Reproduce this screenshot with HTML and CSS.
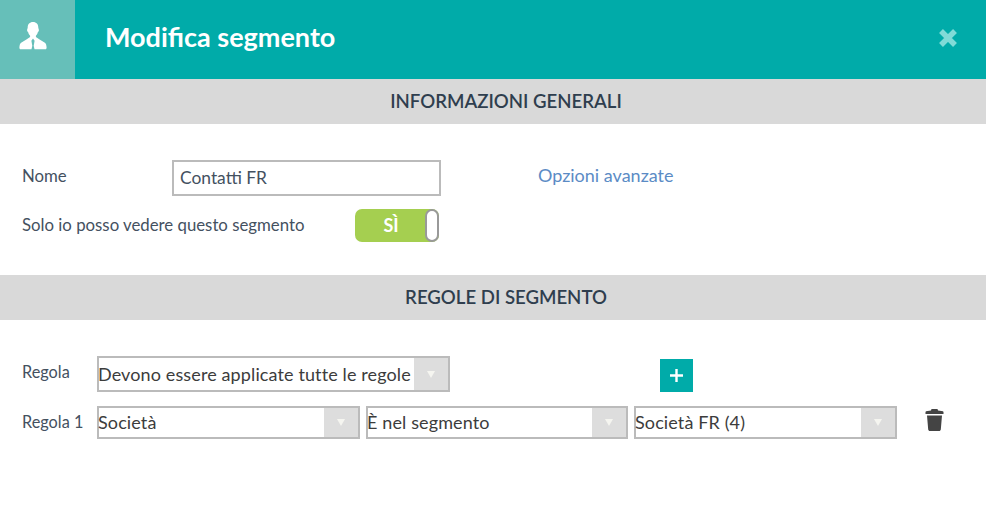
FILE: index.html
```html
<!DOCTYPE html>
<html lang="it">
<head>
  <meta charset="UTF-8" />
  <title>Modifica segmento</title>
  <link rel="stylesheet" href="styles.css">
</head>
<body>
  <header class="top-bar">
    <div class="top-icon">
      <svg width="28" height="28" viewBox="0 0 28 28">
        <path fill="#fff" d="M14 0c3.400 0 5.300 2.200 5.300 5.600 0 1.100.6 1.500.6 2.600 0 1-.6 1.500-1 1.900-.4 1.700-1.200 2.800-2 3.700v1.300l3.300 2.100 5.700 3.500c1.100.8 1.600 2.400 1.700 4.800 0 1.200-.4 1.800-1.400 1.800H15.500l-.8-3.600.9-5-1.600-2.300-1.600 2.300.9 5-.8 3.600H1.800c-1 0-1.400-.6-1.400-1.800.1-2.400.6-4 1.700-4.800l5.700-3.500 3.300-2.100V13.800c-.8-.9-1.600-2-2-3.700-.4-.4-1-.9-1-1.900 0-1.100.6-1.500.6-2.600C8.700 2.200 10.600 0 14 0z"/>
      </svg>
    </div>
    <h1 class="top-title">Modifica segmento</h1>
    <svg class="top-close" width="20" height="20" viewBox="0 0 20 20">
      <path d="M3 3l14 14M17 3L3 17" stroke="#80dbd7" stroke-width="5.500" />
    </svg>
  </header>

  <h2 class="section-bar">INFORMAZIONI GENERALI</h2>
  <section class="general">
    <div class="name-row">
      <label class="name-label" for="nome">Nome</label>
      <input class="text-input" id="nome" type="text" value="Contatti FR" />
      <a class="adv-link" href="#">Opzioni avanzate</a>
    </div>
    <div class="private-row">
      <span class="private-label">Solo io posso vedere questo segmento</span>
      <div class="toggle">
        <span class="toggle-text">SÌ</span>
        <span class="toggle-knob"></span>
      </div>
    </div>
  </section>

  <h2 class="section-bar">REGOLE DI SEGMENTO</h2>
  <section class="rules">
    <div class="rule-row rule-main">
      <span class="rule-label">Regola</span>
      <div class="combo combo-wide">
        <span class="combo-text">Devono essere applicate tutte le regole</span>
        <span class="combo-arrow"></span>
      </div>
      <button class="add-btn" type="button">
        <svg width="13" height="13" viewBox="0 0 13 13"><path d="M6.500 0v13M0 6.500h13" stroke="#fff" stroke-width="2.400" /></svg>
      </button>
    </div>
    <div class="rule-row rule-one">
      <span class="rule-label">Regola 1</span>
      <div class="combo">
        <span class="combo-text">Società</span>
        <span class="combo-arrow"></span>
      </div>
      <div class="combo combo-mid">
        <span class="combo-text">È nel segmento</span>
        <span class="combo-arrow"></span>
      </div>
      <div class="combo">
        <span class="combo-text">Società FR (4)</span>
        <span class="combo-arrow"></span>
      </div>
      <svg class="trash" width="19" height="22" viewBox="0 0 19 22">
        <path fill="#444" d="M6.500 0h6l.5 1.500 5 .8.500.7V5H.5V3l.5-.7 5-.8zM2 6.500h15L15.800 20.500c-.1.900-.8 1.500-1.700 1.500H4.900c-.9 0-1.600-.6-1.700-1.500z"/>
      </svg>
    </div>
  </section>
</body>
</html>
```

FILE: styles.css
```css
* {
  box-sizing: border-box;
}
body {
  margin: 0;
  background: #fff;
  font-family: "Lato", "Open Sans", sans-serif;
  color: #44515f;
  height: 515px;
  overflow: hidden;
}
.top-bar {
  height: 79px;
  background: #00aba9;
  display: flex;
  align-items: center;
}
.top-icon {
  width: 75px;
  height: 79px;
  background: #66bfb9;
  display: flex;
  align-items: center;
  justify-content: center;
  padding: 0 9px 8px 0;
}
.top-title {
  margin: 0 0 6px 30px;
  font-size: 27px;
  font-weight: 700;
  color: #fff;
  flex: 1;
}
.top-close {
  margin: 0 28px 3px 0;
}
.section-bar {
  margin: 0;
  height: 45px;
  line-height: 45px;
  padding-left: 26px;
  background: #d9d9d9;
  text-align: center;
  font-size: 18.600px;
  font-weight: 600;
  color: #2f3e4e;
}
.general {
  height: 151px;
  padding: 36px 0 0 22px;
}
.name-row {
  display: flex;
  align-items: center;
  height: 36px;
}
.name-label {
  width: 150px;
  font-size: 16.800px;
  padding-bottom: 6px;
}
.text-input {
  width: 269px;
  height: 36px;
  border: 2px solid #bbb;
  padding: 0 6px 2px;
  font: 17.400px "Lato", sans-serif;
  color: #44515f;
  background: #fff;
  outline: none;
}
.adv-link {
  margin-left: 97px;
  padding-bottom: 6px;
  font-size: 18px;
  color: #5b8bc5;
  text-decoration: none;
}
.private-row {
  display: flex;
  align-items: center;
  margin-top: 13px;
  height: 33px;
}
.private-label {
  width: 333px;
  font-size: 16.800px;
  padding-bottom: 2px;
}
.toggle {
  width: 84px;
  height: 33px;
  background: #a5cf50;
  border-radius: 7px;
  display: flex;
  align-items: stretch;
}
.toggle-text {
  flex: 1;
  text-align: center;
  line-height: 33px;
  font-size: 18px;
  font-weight: 700;
  color: #fff;
  padding-left: 2px;
}
.toggle-knob {
  width: 14px;
  background: #fff;
  border: 2px solid #999;
  border-radius: 7px;
}
.rules {
  padding: 36px 0 0 22px;
}
.rule-row {
  display: flex;
  align-items: center;
}
.rule-one {
  margin-top: 14px;
}
.rule-label {
  width: 75px;
  font-size: 16.300px;
  flex: none;
  padding-bottom: 2px;
}
.rule-main .rule-label {
  padding-bottom: 6px;
}
.combo {
  width: 263px;
  height: 33px;
  border: 2px solid #bbb;
  display: flex;
  align-items: stretch;
  margin-right: 6px;
  background: #fff;
}
.combo-mid {
  width: 262px;
}
.combo-wide {
  width: 353px;
  height: 36px;
  margin-right: 0;
}
.combo-text {
  flex: 1;
  font-size: 18px;
  letter-spacing: 0.120px;
  margin-left: -1px;
  line-height: 29px;
  color: #3c3c3c;
  white-space: nowrap;
}
.combo-wide .combo-text {
  line-height: 32px;
}
.combo-arrow {
  width: 34px;
  background: #ddd;
  display: flex;
  align-items: center;
  justify-content: center;
}
.combo-arrow::after {
  content: "";
  border-left: 4px solid transparent;
  border-right: 4px solid transparent;
  border-top: 7px solid #f5f5f0;
}
.add-btn {
  width: 33px;
  height: 33px;
  margin: 3px 0 0 210px;
  padding: 0;
  border: none;
  background: #00aba9;
  display: flex;
  align-items: center;
  justify-content: center;
}
.trash {
  margin: -5px 0 0 22px;
}
```
